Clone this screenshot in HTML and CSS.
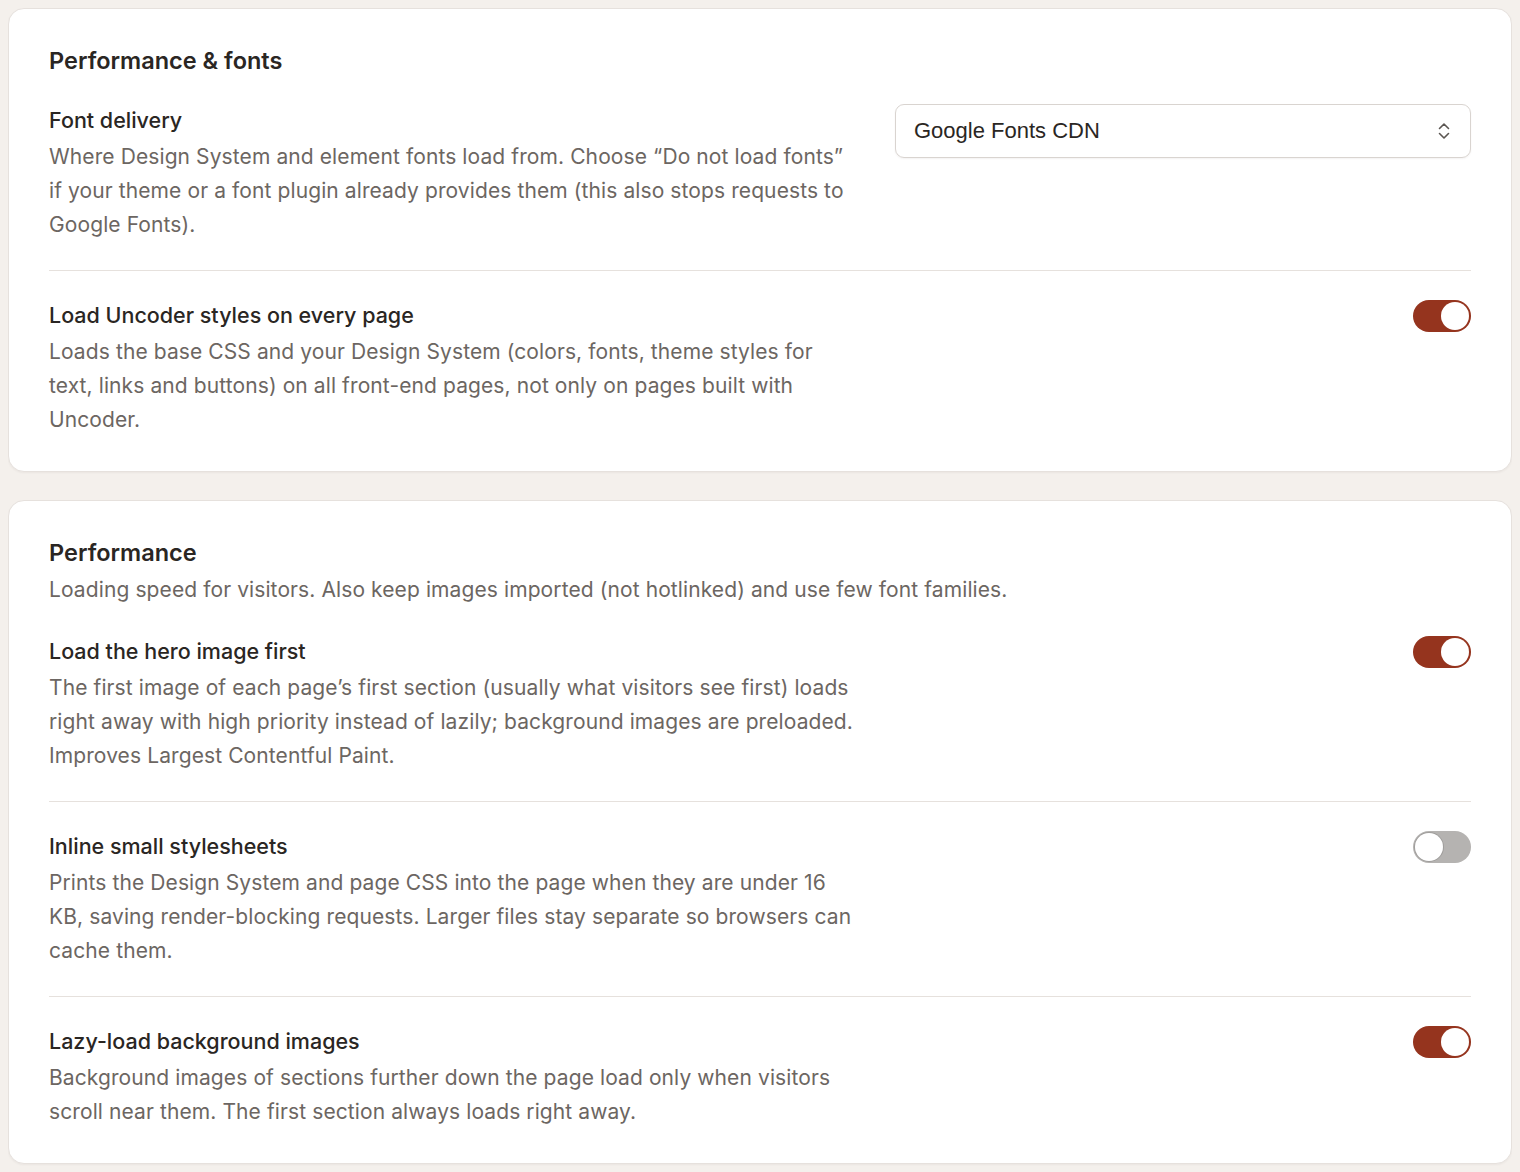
FILE: index.html
```html
<!DOCTYPE html>
<html lang="en">
<head>
    <meta charset="UTF-8">
    <meta name="viewport" content="width=device-width, initial-scale=1.0">
    <title>Settings – Performance</title>
    <link rel="stylesheet" href="styles.css">
</head>
<body>
    <section class="card">
        <h2 class="card-title">Performance &amp; fonts</h2>

        <div class="setting">
            <div class="setting-text">
                <h3 class="setting-label">Font delivery</h3>
                <p class="setting-desc">Where Design System and element fonts load from. Choose “Do not load fonts” if your theme or a font plugin already provides them (this also stops requests to Google Fonts).</p>
            </div>
            <div class="select">
                <span>Google Fonts CDN</span>
                <svg class="select-arrows" width="14" height="20" viewBox="0 0 14 20" fill="none" stroke="currentColor" stroke-width="1.6" stroke-linecap="round" stroke-linejoin="round">
                    <path d="M2.5 7.5 L7 3 L11.5 7.5"/>
                    <path d="M2.5 12.5 L7 17 L11.5 12.5"/>
                </svg>
            </div>
        </div>

        <div class="setting">
            <div class="setting-text">
                <h3 class="setting-label">Load Uncoder styles on every page</h3>
                <p class="setting-desc">Loads the base CSS and your Design System (colors, fonts, theme styles for text, links and buttons) on all front-end pages, not only on pages built with Uncoder.</p>
            </div>
            <span class="toggle on"></span>
        </div>
    </section>

    <section class="card">
        <h2 class="card-title">Performance</h2>
        <p class="card-sub">Loading speed for visitors. Also keep images imported (not hotlinked) and use few font families.</p>

        <div class="setting">
            <div class="setting-text">
                <h3 class="setting-label">Load the hero image first</h3>
                <p class="setting-desc">The first image of each page’s first section (usually what visitors see first) loads right away with high priority instead of lazily; background images are preloaded. Improves Largest Contentful Paint.</p>
            </div>
            <span class="toggle on"></span>
        </div>

        <div class="setting">
            <div class="setting-text">
                <h3 class="setting-label">Inline small stylesheets</h3>
                <p class="setting-desc">Prints the Design System and page CSS into the page when they are under 16 KB, saving render-blocking requests. Larger files stay separate so browsers can cache them.</p>
            </div>
            <span class="toggle"></span>
        </div>

        <div class="setting">
            <div class="setting-text">
                <h3 class="setting-label">Lazy-load background images</h3>
                <p class="setting-desc">Background images of sections further down the page load only when visitors scroll near them. The first section always loads right away.</p>
            </div>
            <span class="toggle on"></span>
        </div>
    </section>
</body>
</html>
```

FILE: styles.css
```css
body {
    margin: 8px;
    background-color: #f4f0ec;
    font-family: Inter, "Noto Sans", sans-serif;
    color: #2a2623;
}
.card {
    background-color: #fff;
    border: 1px solid #e6e1dd;
    border-radius: 16px;
    padding: 40px 40px 34px;
    margin-bottom: 28px;
    box-shadow: 0 1px 2px rgba(60, 40, 30, 0.05);
}
.card-title {
    margin: 0 0 32px;
    font-size: 23.5px;
    line-height: 24px;
    font-weight: 600;
}
.card-sub {
    margin: -24px 0 29px;
    font-size: 21px;
    line-height: 34px;
    letter-spacing: 0.1px;
    color: #6c6662;
}
.setting {
    display: flex;
    align-items: flex-start;
    gap: 40px;
    padding: 29px 0 28px;
    border-top: 1px solid #e6e1dd;
}
.card-title + .setting,
.card-sub + .setting {
    border-top: none;
    padding-top: 0;
}
.setting:last-child {
    padding-bottom: 0;
}
.setting-text {
    flex: 1;
    max-width: 805px;
}
.setting-label {
    margin: 0 0 5px;
    font-size: 21.5px;
    line-height: 30px;
    font-weight: 500;
}
.setting-desc {
    margin: 0;
    font-size: 21px;
    line-height: 34px;
    letter-spacing: 0.1px;
    color: #6c6662;
}

/* select box */
.select {
    box-sizing: border-box;
    width: 576px;
    height: 54px;
    margin: -1px 0 0 auto;
    padding: 0 18px;
    display: flex;
    align-items: center;
    justify-content: space-between;
    border: 1px solid #d9d4d0;
    border-radius: 9px;
    box-shadow: 0 1px 2px rgba(60, 40, 30, 0.06);
    font-family: "Liberation Sans", Arial, sans-serif;
    font-size: 22px;
    color: #2a2623;
}
.select-arrows {
    color: #5b5652;
    margin-right: 1px;
}

/* switch */
.toggle {
    position: relative;
    flex: none;
    width: 58px;
    height: 32px;
    margin-left: auto;
    border-radius: 16px;
    background-color: #b5b3b1;
}
.toggle::after {
    content: "";
    position: absolute;
    top: 2px;
    left: 2px;
    width: 28px;
    height: 28px;
    border-radius: 50%;
    background-color: #fff;
    box-shadow: 0 0 0 1px rgba(0, 0, 0, 0.12);
}
.toggle.on {
    background-color: #95341e;
}
.toggle.on::after {
    left: 28px;
    box-shadow: none;
}
```
